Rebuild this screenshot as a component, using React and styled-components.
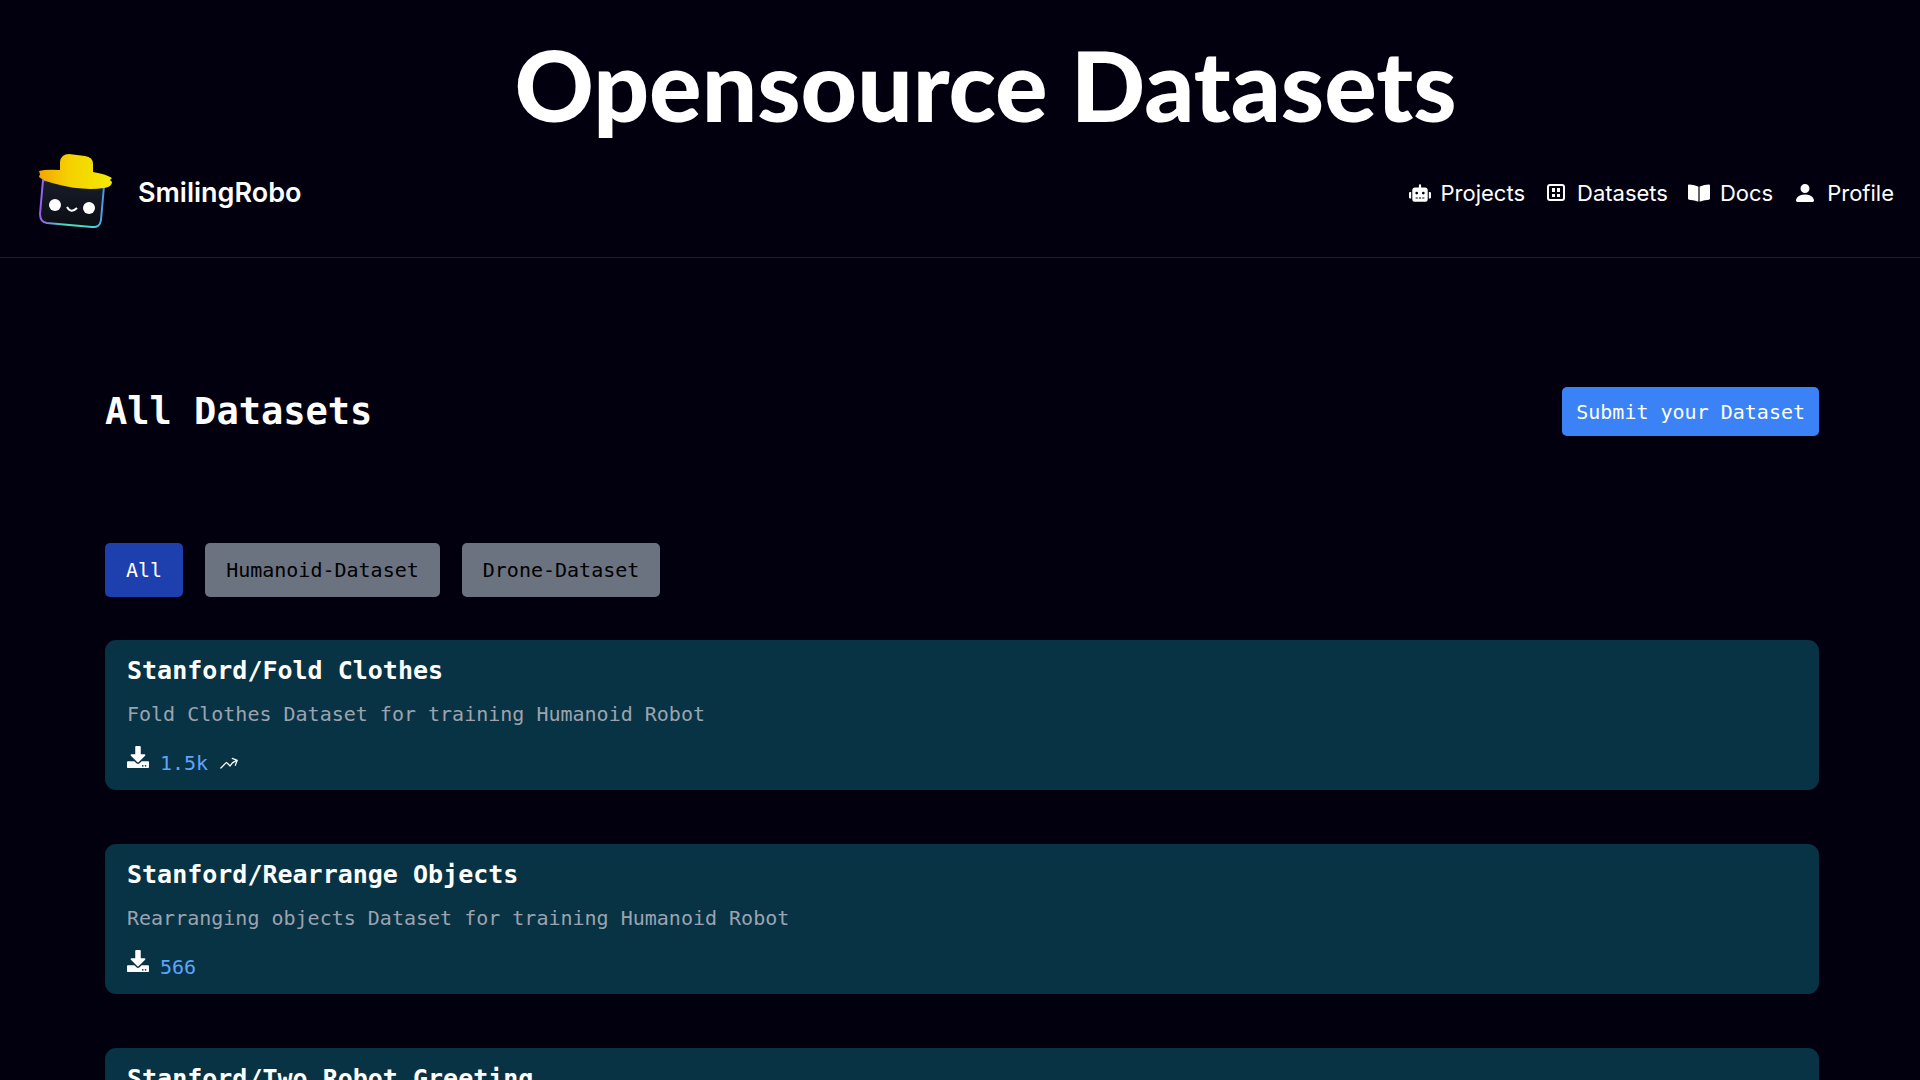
import React, { useState } from 'react';
import styled, { createGlobalStyle } from 'styled-components';
import { FaRobot, FaBookOpen, FaDownload } from 'react-icons/fa';
import { BsPersonFill } from 'react-icons/bs';
import { HiOutlineArrowTrendingUp } from 'react-icons/hi2';

const GlobalStyle = createGlobalStyle`
  * {
    box-sizing: border-box;
  }

  body {
    margin: 0;
    background-color: #02000f;
    color: white;
    font-family: 'DejaVu Sans Mono', monospace;
    font-size: 20px;
  }
`;

const Page = styled.div`
  min-height: 100vh;
  padding-bottom: 54px;
`;

const Banner = styled.h1`
  margin: 0;
  padding: 20px 0 0 51px;
  height: 144px;
  font-family: Lato, sans-serif;
  font-size: 98px;
  font-weight: 900;
  line-height: 128px;
  text-align: center;
`;

const Header = styled.header`
  display: flex;
  align-items: center;
  justify-content: space-between;
  height: 114px;
  padding: 0 26px 16px 38px;
  border-bottom: 1px solid #15202b;
  font-family: Inter, sans-serif;
`;

const Brand = styled.a`
  display: flex;
  align-items: center;
  gap: 25px;
  color: white;
  font-size: 27px;
  font-weight: 600;
  text-decoration: none;
`;

const Nav = styled.nav`
  display: flex;
  align-items: center;
  gap: 20px;
`;

const NavLink = styled.a`
  display: flex;
  align-items: center;
  gap: 10px;
  color: white;
  font-size: 22px;
  text-decoration: none;
`;

const Main = styled.main`
  padding: 129px 101px 0 105px;
`;

const TitleRow = styled.div`
  display: flex;
  align-items: center;
  justify-content: space-between;
  margin-bottom: 107px;
`;

const Title = styled.h2`
  margin: 0;
  font-size: 37px;
  line-height: 48px;
`;

const SubmitButton = styled.button`
  height: 49px;
  padding: 0 14px;
  border: none;
  border-radius: 5px;
  background-color: #3b82f6;
  color: white;
  font: inherit;
  cursor: pointer;
`;

const Filters = styled.div`
  display: flex;
  gap: 22px;
  margin-bottom: 43px;
`;

const FilterButton = styled.button`
  height: 54px;
  padding: 0 21px;
  border: none;
  border-radius: 5px;
  background-color: ${({ $active }) => ($active ? '#1e40af' : '#6b7280')};
  color: ${({ $active }) => ($active ? 'white' : 'black')};
  font: inherit;
  cursor: pointer;
`;

const DatasetList = styled.div`
  display: flex;
  flex-direction: column;
  gap: 54px;
`;

const Card = styled.article`
  padding: 12px 22px 10px;
  border-radius: 11px;
  background-color: #083344;
`;

const CardTitle = styled.h3`
  margin: 0 0 8px;
  font-size: 25px;
  line-height: 38px;
`;

const CardText = styled.p`
  margin: 0 0 16px;
  color: #9ca3af;
  line-height: 32px;
`;

const Stats = styled.div`
  display: flex;
  align-items: center;
  gap: 11px;
  line-height: 34px;
`;

const DownloadIcon = styled(FaDownload)`
  align-self: flex-start;
`;

const Downloads = styled.span`
  color: #60a5fa;
`;

const Logo = () => (
  <svg width="75" height="78" viewBox="0 0 75 78" aria-hidden="true">
    <defs>
      <linearGradient id="hat" x1="0" y1="0" x2="1" y2="0">
        <stop offset="0" stopColor="#f5a400" />
        <stop offset="0.4" stopColor="#f6d000" />
        <stop offset="1" stopColor="#f3ea00" />
      </linearGradient>
      <linearGradient id="edge" x1="0" y1="0" x2="1" y2="0">
        <stop offset="0" stopColor="#9a5cf0" />
        <stop offset="0.4" stopColor="#43e0b8" />
        <stop offset="0.85" stopColor="#45d8d8" />
        <stop offset="1" stopColor="#4a90e8" />
      </linearGradient>
      <linearGradient id="face" x1="0" y1="0" x2="0" y2="1">
        <stop offset="0" stopColor="#181d2b" />
        <stop offset="1" stopColor="#0b0d12" />
      </linearGradient>
    </defs>
    <path
      d="M5 26 L2 60 Q2 68 9 69 L54 73 Q62 74 63 66 L66 32 Z"
      fill="url(#face)"
      stroke="url(#edge)"
      strokeWidth="2"
    />
    <circle cx="17" cy="51" r="6" fill="white" />
    <circle cx="51" cy="54" r="6" fill="white" />
    <path d="M29 53 Q33 60 39 54" fill="none" stroke="white" strokeWidth="2" />
    <path
      d="M1 17 Q8 15 22 16 L22 8 Q23 0 31 0 L47 2 Q55 3 55 10 L55 18 Q68 20 74 24 L72 26 L74 28 Q74 33 66 34 Q44 37 18 30 Q6 27 1 23 L2 20 Z"
      fill="url(#hat)"
    />
  </svg>
);

const DatasetIcon = () => (
  <svg width="22" height="22" viewBox="0 0 22 22" aria-hidden="true">
    <rect x="3" y="3" width="16" height="15" rx="2" fill="none" stroke="white" strokeWidth="2" />
    <path d="M7 6h3v4H7z M12 6h3v4h-3z M7 12h3v3H7z M12 12h3v3h-3z" fill="white" />
  </svg>
);

const navItems = [
  { name: 'Projects', icon: <FaRobot size={22} /> },
  { name: 'Datasets', icon: <DatasetIcon /> },
  { name: 'Docs', icon: <FaBookOpen size={22} /> },
  { name: 'Profile', icon: <BsPersonFill size={24} /> },
];

const filters = ['All', 'Humanoid-Dataset', 'Drone-Dataset'];

const datasets = [
  {
    name: 'Stanford/Fold Clothes',
    text: 'Fold Clothes Dataset for training Humanoid Robot',
    type: 'Humanoid-Dataset',
    downloads: '1.5k',
    trending: true,
  },
  {
    name: 'Stanford/Rearrange Objects',
    text: 'Rearranging objects Dataset for training Humanoid Robot',
    type: 'Humanoid-Dataset',
    downloads: '566',
  },
  {
    name: 'Stanford/Two Robot Greeting',
    text: 'Two Robot Greeting Dataset for training Humanoid Robot',
    type: 'Humanoid-Dataset',
    downloads: '420',
  },
];

const App = () => {
  const [active, setActive] = useState('All');
  const shown = datasets.filter((d) => active === 'All' || d.type === active);

  return (
    <Page>
      <GlobalStyle />
      <Banner>Opensource Datasets</Banner>
      <Header>
        <Brand href="#">
          <Logo />
          SmilingRobo
        </Brand>
        <Nav>
          {navItems.map((item) => (
            <NavLink key={item.name} href="#">
              {item.icon}
              {item.name}
            </NavLink>
          ))}
        </Nav>
      </Header>
      <Main>
        <TitleRow>
          <Title>All Datasets</Title>
          <SubmitButton>Submit your Dataset</SubmitButton>
        </TitleRow>
        <Filters>
          {filters.map((name) => (
            <FilterButton key={name} $active={name === active} onClick={() => setActive(name)}>
              {name}
            </FilterButton>
          ))}
        </Filters>
        <DatasetList>
          {shown.map((dataset) => (
            <Card key={dataset.name}>
              <CardTitle>{dataset.name}</CardTitle>
              <CardText>{dataset.text}</CardText>
              <Stats>
                <DownloadIcon size={22} />
                <Downloads>{dataset.downloads}</Downloads>
                {dataset.trending && <HiOutlineArrowTrendingUp size={20} />}
              </Stats>
            </Card>
          ))}
        </DatasetList>
      </Main>
    </Page>
  );
};

export default App;
